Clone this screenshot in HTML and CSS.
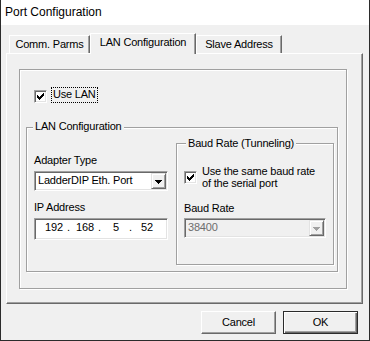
FILE: index.html
```html
<!DOCTYPE html>
<html lang="en">
<head>
  <meta charset="UTF-8">
  <title>Port Configuration</title>
  <link rel="stylesheet" href="styles.css">
</head>
<body>
  <div class="dialog">
    <div class="titlebar">Port Configuration</div>
    <div class="client">
      <div class="tabs">
        <div class="tab tab-comm">Comm. Parms</div>
        <div class="tab tab-lan active">LAN Configuration</div>
        <div class="tab tab-slave">Slave Address</div>
      </div>
      <div class="panel">
        <div class="frame">
          <div class="use-lan">
            <span class="checkbox">
              <svg width="7" height="7" viewBox="0 0 7 7"><path d="M6 0h1v1H6zM5 1h2v1H5zM0 2h1v1H0zM4 2h3v1H4zM0 3h2v1H0zM3 3h3v1H3zM0 4h5v1H0zM1 5h3v1H1zM2 6h1v1H2z"/></svg>
            </span>
            <span class="focus">Use LAN</span>
          </div>
          <div class="group lan-group">
            <span class="caption">LAN Configuration</span>
            <div class="lan-body">
              <div class="lan-left">
                <div class="field-label">Adapter Type</div>
                <div class="combo adapter">
                  <span class="combo-text">LadderDIP Eth. Port</span>
                  <span class="combo-btn">
                    <svg width="7" height="4" viewBox="0 0 7 4"><path d="M0 0h7v1H0zM1 1h5v1H1zM2 2h3v1H2zM3 3h1v1H3z"/></svg>
                  </span>
                </div>
                <div class="field-label ip-label">IP Address</div>
                <div class="ip-box">
                  <span class="octet">192</span><span class="dot">.</span>
                  <span class="octet">168</span><span class="dot">.</span>
                  <span class="octet">5</span><span class="dot">.</span>
                  <span class="octet">52</span>
                </div>
              </div>
              <div class="group baud-group">
                <span class="caption">Baud Rate (Tunneling)</span>
                <div class="same-rate">
                  <span class="checkbox">
                    <svg width="7" height="7" viewBox="0 0 7 7"><path d="M6 0h1v1H6zM5 1h2v1H5zM0 2h1v1H0zM4 2h3v1H4zM0 3h2v1H0zM3 3h3v1H3zM0 4h5v1H0zM1 5h3v1H1zM2 6h1v1H2z"/></svg>
                  </span>
                  <span class="check-text">Use the same baud rate<br>of the serial port</span>
                </div>
                <div class="field-label baud-label">Baud Rate</div>
                <div class="combo baud disabled">
                  <span class="combo-text">38400</span>
                  <span class="combo-btn">
                    <svg width="7" height="4" viewBox="0 0 7 4"><path d="M0 0h7v1H0zM1 1h5v1H1zM2 2h3v1H2zM3 3h1v1H3z"/></svg>
                  </span>
                </div>
              </div>
            </div>
          </div>
        </div>
      </div>
      <div class="buttons">
        <button type="button" class="btn">Cancel</button>
        <button type="button" class="btn default">OK</button>
      </div>
    </div>
  </div>
</body>
</html>
```

FILE: styles.css
```css
* { box-sizing: border-box; }
body { margin: 0; background: #f0f0f0; font-family: "Liberation Sans", Arial, sans-serif; font-size: 11px; letter-spacing: -0.2px; color: #000; }
.dialog { width: 370px; height: 341px; background: #f0f0f0; border: 1px solid #2b2b2b; border-top: 0; }
.titlebar { height: 25px; line-height: 25px; background: #fff; padding-left: 4px; font-size: 12px; letter-spacing: 0; }
.client { padding: 8px 0 0 5px; }

/* tabs */
.tabs { display: flex; align-items: flex-end; padding-left: 3px; }
.tab { height: 18px; padding-top: 2px; line-height: 13px; text-align: center; background: #f0f0f0; border: 1px solid; border-bottom: 0; border-color: #fff #696969 #fff #fff; box-shadow: inset -1px 0 #a0a0a0; }
.tab.active { height: 21px; margin-bottom: -1px; position: relative; z-index: 1; }
.tab-comm { width: 81px; }
.tab-lan { width: 106px; }
.tab-slave { width: 86px; }

.panel { width: 357px; height: 251px; border: 1px solid; border-color: #fff #696969 #696969 #fff; box-shadow: inset -1px -1px #a0a0a0; padding: 15px 0 0 12px; }
.frame { width: 328px; height: 220px; border: 1px solid #a0a0a0; box-shadow: inset 1px 1px #fff, 1px 1px #fff; padding: 17px 0 0 6px; }

/* checkboxes */
.checkbox { width: 13px; height: 13px; flex: none; display: flex; align-items: center; justify-content: center; background: #fff; border: 1px solid; border-color: #a0a0a0 #fff #fff #a0a0a0; box-shadow: inset 1px 1px #696969, inset -1px -1px #e3e3e3; }
.checkbox svg { display: block; }
.use-lan { display: flex; align-items: flex-start; margin-left: 8px; }
.use-lan .checkbox { margin-top: 3px; }
.focus { margin-left: 4px; border: 1px dotted #000; padding: 0 1px 1px; line-height: 13px; }

/* group boxes */
.group { position: relative; border: 1px solid #a0a0a0; box-shadow: inset 1px 1px #fff, 1px 1px #fff; }
.caption { position: absolute; padding: 0 2px; background: #f0f0f0; line-height: 13px; white-space: nowrap; }
.lan-group { width: 312px; height: 145px; margin-top: 24px; padding: 15px 0 0 7px; }
.lan-group > .caption { left: 6px; top: -8px; }
.lan-body { display: flex; align-items: flex-start; }
.lan-left { width: 134px; margin-top: 11px; }
.field-label { line-height: 13px; white-space: nowrap; }
.ip-label { margin-top: 10px; }

/* combo boxes */
.combo { display: flex; height: 20px; margin-top: 4px; padding: 1px; background: #fff; border: 1px solid; border-color: #a0a0a0 #fff #fff #a0a0a0; box-shadow: inset 1px 1px #696969, inset -1px -1px #e3e3e3; }
.combo-text { flex: 1; padding: 1px 0 0 2px; line-height: 13px; white-space: nowrap; overflow: hidden; }
.combo-btn { width: 15px; height: 16px; display: flex; align-items: center; justify-content: center; background: #f0f0f0; border: 1px solid; border-color: #e3e3e3 #696969 #696969 #e3e3e3; box-shadow: inset 1px 1px #fff, inset -1px -1px #a0a0a0; }
.combo-btn svg { display: block; margin-top: 1px; }
.combo.disabled { background: #f0f0f0; color: #6d6d6d; }
.combo.disabled .combo-btn svg { fill: #a0a0a0; }

.ip-box { display: flex; height: 22px; margin-top: 4px; padding: 2px 0 0 7px; background: #fff; border: 1px solid; border-color: #a0a0a0 #fff #fff #a0a0a0; box-shadow: inset 1px 1px #696969, inset -1px -1px #e3e3e3; line-height: 13px; }
.octet { width: 24px; text-align: center; }
.dot { width: 7px; padding-left: 1px; }

.baud-group { width: 158px; height: 122px; margin-left: 8px; padding: 21px 0 0 7px; }
.baud-group > .caption { left: 9px; top: -7px; }
.same-rate { display: flex; align-items: center; }
.check-text { margin-left: 5px; line-height: 12px; white-space: nowrap; }
.baud-label { margin-top: 13px; }
.combo.baud { width: 142px; margin-top: 3px; }

/* buttons */
.buttons { display: flex; justify-content: flex-end; gap: 7px; margin-top: 7px; padding-right: 11px; }
.btn { width: 75px; height: 23px; padding: 0; font: inherit; letter-spacing: inherit; color: #000; background: #f0f0f0; border: 1px solid; border-color: #fff #696969 #696969 #fff; box-shadow: inset -1px -1px #a0a0a0; line-height: 13px; }
.btn.default { border-color: #2b2b2b; box-shadow: inset 1px 1px #fff, inset -1px -1px #696969, inset -2px -2px #a0a0a0; }
```
